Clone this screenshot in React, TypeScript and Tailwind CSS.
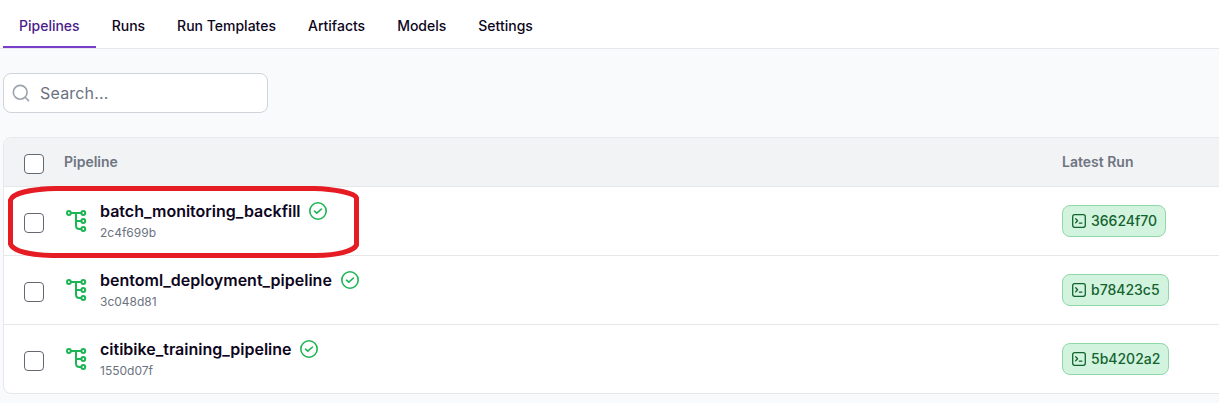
const tabs = ["Pipelines", "Runs", "Run Templates", "Artifacts", "Models", "Settings"];

const pipelines = [
  { name: "batch_monitoring_backfill", id: "2c4f699b", run: "36624f70" },
  { name: "bentoml_deployment_pipeline", id: "3c048d81", run: "b78423c5" },
  { name: "citibike_training_pipeline", id: "1550d07f", run: "5b4202a2" },
];

function SearchIcon() {
  return (
    <svg className="size-5 shrink-0 text-[#9ca3af]" viewBox="0 0 20 20" fill="none" stroke="currentColor" strokeWidth="1.6" strokeLinecap="round">
      <circle cx="9.2" cy="9.3" r="6.9" />
      <path d="M14.2 14.3L17.5 17.6" />
    </svg>
  );
}

function PipelineIcon() {
  return (
    <svg className="size-6 shrink-0 text-[#1cb454]" viewBox="0 0 24 24" fill="none" stroke="currentColor" strokeWidth="2">
      <circle cx="4.9" cy="4" r="1.9" />
      <circle cx="19.3" cy="4" r="1.9" />
      <circle cx="19.3" cy="12" r="1.9" />
      <circle cx="19.3" cy="20" r="1.9" />
      <path d="M6.8 4H17.4M12 4V16.5Q12 20 15.5 20H17.4M12 12H17.4" />
    </svg>
  );
}

function SuccessIcon() {
  return (
    <svg className="size-5 shrink-0 text-[#1cb454]" viewBox="0 0 20 20" fill="none" stroke="currentColor" strokeWidth="1.6" strokeLinecap="round" strokeLinejoin="round">
      <circle cx="10" cy="10" r="8.2" />
      <path d="M6.5 10.2L8.8 12.2L13.5 8" />
    </svg>
  );
}

function TerminalIcon() {
  return (
    <svg className="size-4 shrink-0" viewBox="0 0 16 16" fill="none" stroke="currentColor" strokeWidth="1.3" strokeLinecap="round" strokeLinejoin="round">
      <rect x="1.7" y="1.7" width="12.6" height="12.6" rx="2" />
      <path d="M4.7 5.8L6.6 7.8L4.7 9.8M8.3 10.1H10.9" />
    </svg>
  );
}

function Checkbox() {
  return (
    <input
      type="checkbox"
      className="relative top-0.5 size-5 shrink-0 appearance-none rounded-[4px] border border-[#646872] bg-white"
    />
  );
}

export default function App() {
  return (
    <div className="h-[403px] overflow-hidden bg-[#f9fafb] font-['Inter','Liberation_Sans',sans-serif] text-[#0d061d]">
      <nav className="flex h-[49px] items-end border-b border-[#e5e7eb] bg-white pl-[3px]">
        {tabs.map((tab, i) => (
          <a
            key={tab}
            className={
              i === 0
                ? "flex h-12 items-center border-b-2 border-[#7a3ec8] px-4 pt-2 pb-0.5 text-sm font-medium text-[#4c1d8a]"
                : "flex h-12 items-center border-b-2 border-transparent px-4 pt-2 pb-0.5 text-sm font-medium"
            }
          >
            {tab}
          </a>
        ))}
      </nav>

      <main className="pt-6 pl-[3px]">
        <label className="flex h-10 w-[265px] items-center gap-[9px] rounded-lg border border-[#d0d3d9] bg-white pl-[7px]">
          <SearchIcon />
          <input
            type="text"
            placeholder="Search..."
            className="w-full bg-transparent text-base tracking-[0.012em] outline-none placeholder:text-[#6b7280]"
          />
        </label>

        <section className="relative mt-6 w-[1240px] rounded-lg border border-[#e5e7eb] bg-white">
          <header className="flex h-[49px] items-center rounded-t-lg border-b border-[#e5e7eb] bg-[#f1f3f5] pl-5 text-sm font-semibold text-[#6f7581]">
            <Checkbox />
            <span className="ml-5 w-[998px]">Pipeline</span>
            <span>Latest Run</span>
          </header>
          <div className="divide-y divide-[#e5e7eb]">
            {pipelines.map((p, i) => (
              <div key={p.id} className={i < 2 ? "flex h-[69px] items-center pl-5" : "flex h-[68px] items-center pl-5"}>
                <Checkbox />
                <div className="ml-5 flex w-[998px] items-center gap-3">
                  <PipelineIcon />
                  <div>
                    <div className="-mt-px mb-px flex items-center gap-[7.8px]">
                      <span className="text-base leading-6 font-semibold">{p.name}</span>
                      <SuccessIcon />
                    </div>
                    <div className="text-xs leading-[18px] text-[#6b7280]">{p.id}</div>
                  </div>
                </div>
                <span className="flex h-8 items-center gap-1 rounded-lg border border-[#8fd8a8] bg-[#d2f3de] px-2 text-sm font-medium text-[#12632f]">
                  <TerminalIcon />
                  {p.run}
                </span>
              </div>
            ))}
          </div>
          <svg className="pointer-events-none absolute top-[46px] left-1 h-[76px] w-[354px]" viewBox="0 0 354 76" fill="none" stroke="#e51c24" strokeWidth="5">
            <path d="M48 4.5H306C326 5 347 9 348.500 14V61C346 67 330 71 308 71.5H44C22 71 5 67 2.500 60V16C5 9 24 5 48 4.5Z" />
          </svg>
        </section>
      </main>
    </div>
  );
}
